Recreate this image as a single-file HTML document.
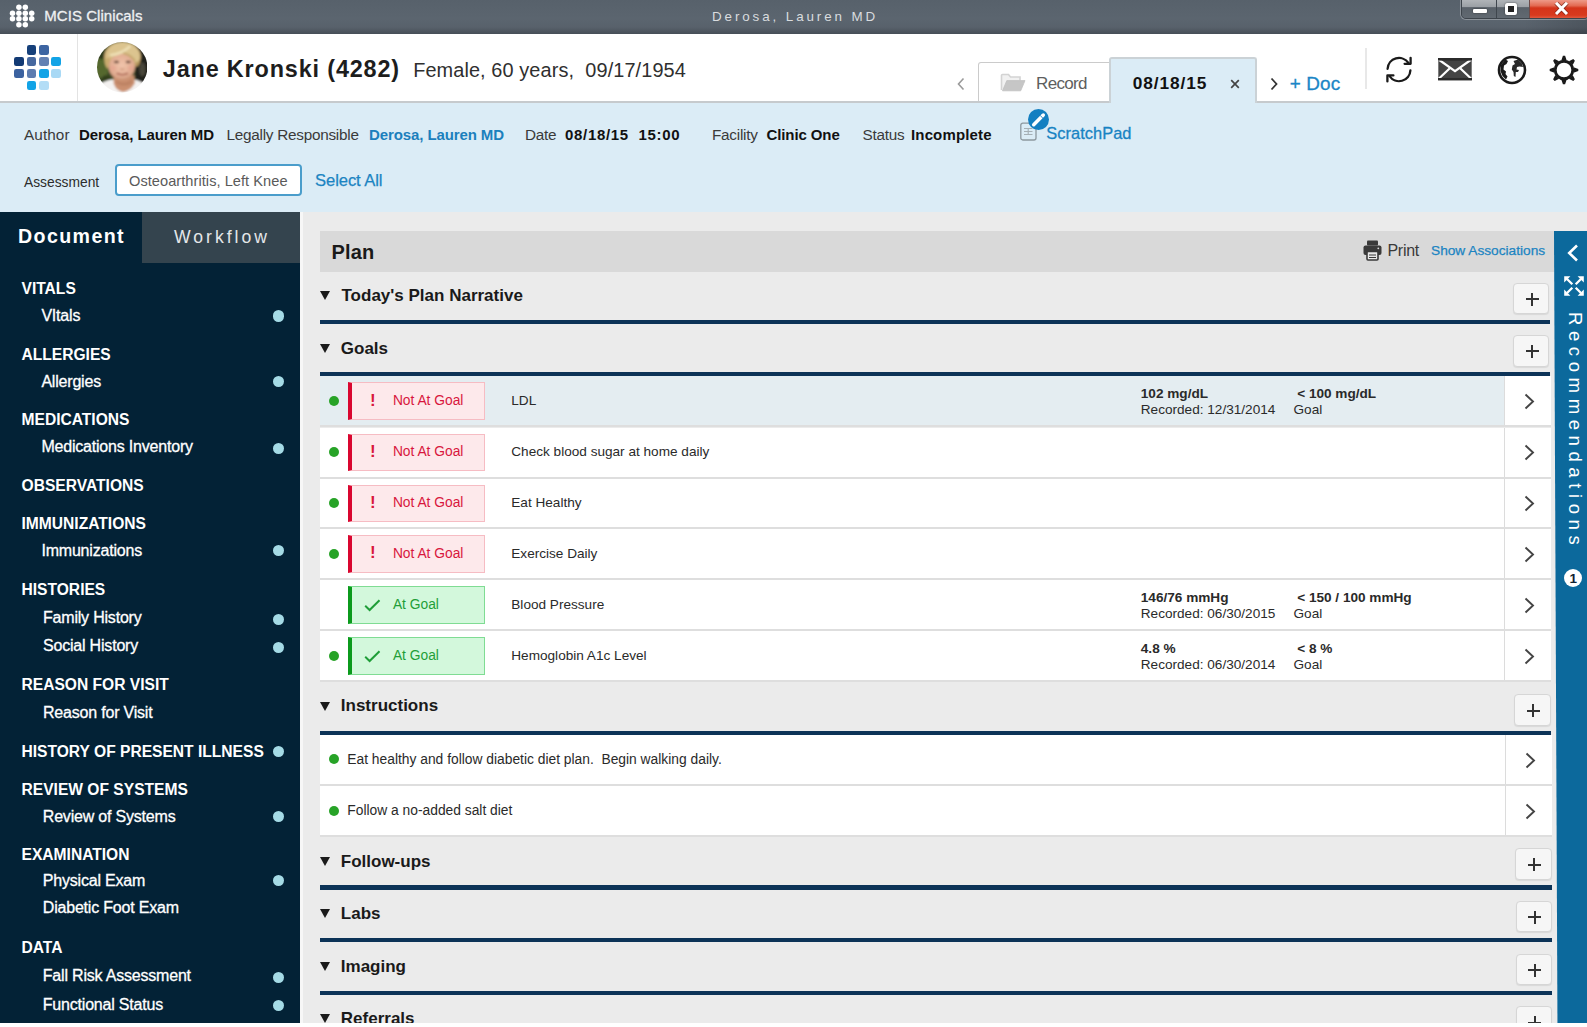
<!DOCTYPE html>
<html lang="en">
<head>
<meta charset="utf-8">
<title>MCIS Clinicals</title>
<style>
*{box-sizing:border-box;margin:0;padding:0}
html,body{width:1587px;height:1027px;overflow:hidden;background:#fff}
body{position:relative;font-family:"Liberation Sans",Arial,sans-serif;color:#222;-webkit-font-smoothing:antialiased}
.a{position:absolute}
.t{position:absolute;white-space:nowrap;line-height:1}
.b{font-weight:bold}
/* title bar */
#titlebar{left:0;top:0;width:1587px;height:34px;background:linear-gradient(90deg,rgba(0,0,0,0) 0,rgba(0,0,0,0) 96%,rgba(0,0,0,.14) 100%),linear-gradient(#57616b 0,#5b656f 55%,#58616b 80%,#464e57 100%)}
#titlebar .dot{position:absolute;width:5.4px;height:5.4px;border-radius:50%;background:#fff}
/* header */
#header{left:0;top:34px;width:1587px;height:68.8px;background:#fff;border-bottom:2px solid #c6cacd;z-index:3}
.sq{position:absolute;width:9.6px;height:9.4px;border-radius:2.2px}
/* info bar */
#info{left:0;top:102px;width:1587px;height:109.8px;background:#dbecf6;z-index:2}
.seg{font-size:15.3px;color:#3a3a3a;letter-spacing:-0.25px}
.segb{font-size:15px;font-weight:bold;color:#111;letter-spacing:-0.1px}
/* sidebar */
#side{left:0;top:211px;width:300px;height:812px;background:#032236}
#side .h{position:absolute;left:21.5px;font-weight:bold;font-size:15.6px;color:#fff;white-space:nowrap;line-height:1}
#side .i{position:absolute;margin-top:0.4px;font-size:16px;color:#fff;white-space:nowrap;line-height:1;letter-spacing:-0.2px;-webkit-text-stroke:0.3px #fff}
#side .d{position:absolute;left:272.7px;width:11.2px;height:11.2px;border-radius:50%;background:#a5dbe6}
/* main */
#main{left:300px;top:211px;width:1287px;height:812px;background:#ebebeb;overflow:hidden}
.sec{position:absolute;font-weight:bold;font-size:17px;color:#1a1a1a;white-space:nowrap;line-height:1}
.tri{position:absolute;width:0;height:0;border-left:5.8px solid transparent;border-right:5.8px solid transparent;border-top:9.6px solid #1a1a1a}
.bar{position:absolute;left:320px;height:4.4px;background:#0c3357}
.plus{position:absolute;margin:-1.2px 0 0 -1.2px;width:36.2px;height:31.6px;background:#f6f6f6;border:1px solid #d6d6d6;border-radius:4px;box-shadow:0 1px 1px rgba(0,0,0,.08)}
.plus:before{content:"";position:absolute;left:11.5px;top:14.5px;width:13px;height:2px;background:#333}
.plus:after{content:"";position:absolute;left:17px;top:9px;width:2px;height:13px;background:#333}
.row{position:absolute;left:20px;background:#fff;border-bottom:2px solid #dedede}
.row .chev{position:absolute;right:0;top:0;bottom:0;width:47px;background:#fff;border-left:1.5px solid #dcdcdc}
.row .chev svg{position:absolute;left:19px;top:50%;margin-top:-7.8px}
.gd{position:absolute;left:8.7px;width:10px;height:10px;border-radius:50%;background:#27a327}
.badge{position:absolute;left:27.7px;top:6px;width:137.5px;height:37.4px;border:1px solid;border-left-width:4.6px}
.badge.red{background:#fde9eb;border-color:#f6bcc3;border-left-color:#d9062f;color:#d8173d}
.badge.grn{background:#d3f8dc;border-color:#7fdc93;border-left-color:#0b9a1c;color:#1f9e38}
.badge span{position:absolute;left:41.2px;top:10.6px;font-size:13.8px;line-height:1;white-space:nowrap}
.badge b{position:absolute;left:18.2px;top:8.3px;font-size:17px;line-height:1}
.rt{position:absolute;font-size:13.6px;color:#2a2a2a;white-space:nowrap;line-height:1}
</style>
</head>
<body>

<!-- ================= TITLE BAR ================= -->
<div id="titlebar" class="a">
  <svg class="a" style="left:0;top:0" width="40" height="32" viewBox="0 0 40 32" fill="#fff"><circle cx="18.9" cy="7.2" r="2.75"/><circle cx="25.3" cy="7.2" r="2.75"/><circle cx="12.5" cy="13.2" r="2.75"/><circle cx="18.9" cy="13.2" r="2.75"/><circle cx="25.3" cy="13.2" r="2.75"/><circle cx="31.7" cy="13.2" r="2.75"/><circle cx="12.5" cy="18.7" r="2.75"/><circle cx="18.9" cy="18.7" r="2.75"/><circle cx="25.3" cy="18.7" r="2.75"/><circle cx="31.7" cy="18.7" r="2.75"/><circle cx="18.9" cy="24.7" r="2.75"/><circle cx="25.3" cy="24.7" r="2.75"/></svg>
  <div class="t" style="left:44.3px;top:7.8px;font-size:15px;color:#eef0f2;letter-spacing:0.05px;-webkit-text-stroke:0.3px #eef0f2">MCIS Clinicals</div>
  <div class="t" style="left:712px;top:9.5px;font-size:13.4px;color:#d9dcdf;letter-spacing:2.9px">Derosa, Lauren MD</div>
  <div class="a" style="left:1460.5px;top:-1px;width:128px;height:20px;border:1px solid #3d444b;border-radius:0 0 5px 5px;overflow:hidden;box-shadow:0 0 0 1px rgba(255,255,255,.3)">
    <div class="a" style="left:0;top:0;width:35px;height:19px;background:linear-gradient(#b0b4b8 0,#9ba0a5 36%,#596169 40%,#626a72 100%);border-right:1px solid #3f464d"></div>
    <div class="a" style="left:35px;top:0;width:33px;height:19px;background:linear-gradient(#b0b4b8 0,#9ba0a5 36%,#596169 40%,#626a72 100%);border-right:1px solid #6d4a48"></div>
    <div class="a" style="left:68px;top:0;width:59px;height:19px;background:linear-gradient(#ee9a88 0,#e36a52 30%,#d4341a 42%,#d83a1e 80%,#e2634a 100%)"></div>
    <div class="a" style="left:11.5px;top:9.3px;width:13.5px;height:3.8px;background:#fff;border-radius:1px;box-shadow:0 0 1.5px #222"></div>
    <div class="a" style="left:43px;top:3.2px;width:12.4px;height:11.6px;border:3.2px solid #fff;border-radius:2px;background:#222;box-shadow:0 0 1.5px #222"></div>
    <svg class="a" style="left:92.5px;top:2px" width="15" height="13" viewBox="0 0 15 13"><path d="M2 0.8 L13 12 M13 0.8 L2 12" stroke="#5a1a10" stroke-opacity=".55" stroke-width="4.6" fill="none"/><path d="M2 0.8 L13 12 M13 0.8 L2 12" stroke="#fff" stroke-width="3" fill="none"/></svg>
  </div>
</div>

<!-- ================= HEADER ================= -->
<div id="header" class="a">
  <i class="sq" style="left:26.6px;top:11.2px;background:#16407a"></i><i class="sq" style="left:39.0px;top:11.2px;background:#3d65a2"></i><i class="sq" style="left:14.3px;top:23.1px;background:#123a74"></i><i class="sq" style="left:26.6px;top:23.1px;background:#46689f"></i><i class="sq" style="left:39.0px;top:23.1px;background:#6381b3"></i><i class="sq" style="left:51.4px;top:23.1px;background:#12a3e6"></i><i class="sq" style="left:14.3px;top:34.9px;background:#3c62a0"></i><i class="sq" style="left:26.6px;top:34.9px;background:#5d7cb0"></i><i class="sq" style="left:39.0px;top:34.9px;background:#12a3e6"></i><i class="sq" style="left:51.4px;top:34.9px;background:#a9d9f5"></i><i class="sq" style="left:26.6px;top:46.7px;background:#12a3e6"></i><i class="sq" style="left:39.0px;top:46.7px;background:#b3ddf6"></i>
  <div class="a" style="left:76.5px;top:0;width:1.5px;height:67px;background:#e3e3e3"></div>
  <!-- avatar -->
  <svg class="a" id="avatar" style="left:96.8px;top:8.3px" width="50.4" height="50.4" viewBox="0 0 50 50">
    <defs>
      <clipPath id="avc"><circle cx="25" cy="25" r="25"/></clipPath>
      <filter id="avb" x="-10%" y="-10%" width="120%" height="120%"><feGaussianBlur stdDeviation="0.9"/></filter>
      <radialGradient id="avh" cx="50%" cy="30%" r="75%"><stop offset="0" stop-color="#ecdcae"/><stop offset="0.6" stop-color="#d3b67c"/><stop offset="1" stop-color="#a98a55"/></radialGradient>
      <radialGradient id="avf" cx="50%" cy="45%" r="60%"><stop offset="0" stop-color="#f0c4ab"/><stop offset="0.7" stop-color="#e2ae93"/><stop offset="1" stop-color="#c48c6e"/></radialGradient>
    </defs>
    <g clip-path="url(#avc)"><g filter="url(#avb)">
      <rect x="-2" y="-2" width="54" height="54" fill="#3d4a26"/>
      <ellipse cx="5" cy="24" rx="7" ry="12" fill="#54672f"/>
      <ellipse cx="9" cy="38" rx="5" ry="5" fill="#33401f"/>
      <ellipse cx="4" cy="12" rx="5" ry="5" fill="#2f3a1e"/>
      <rect x="38" y="-2" width="14" height="54" fill="#24241f"/>
      <ellipse cx="45" cy="27" rx="3" ry="7" fill="#4a463a"/>
      <path d="M-2 52 L-2 46 Q6 38 16 37 L25 47 L36 37 Q44 38 52 46 L52 52 Z" fill="#f4f2f1"/>
      <path d="M16.5 33 L37 33 L37.5 41 Q33 49 26 49.5 Q19 49 16.5 41 Z" fill="#cb9070"/>
      <path d="M19 38 Q27 43 35 37 L35 41 Q27 46 19 41 Z" fill="#b87e5f" opacity=".7"/>
      <ellipse cx="25.3" cy="14.5" rx="18.2" ry="14.5" fill="url(#avh)"/>
      <path d="M7.5 14 Q6.5 24 11 27 L13 17 Z" fill="#c9aa6e"/>
      <path d="M43 14 Q44 22 39.5 25 L38 17 Z" fill="#b3945c"/>
      <ellipse cx="24.6" cy="24.6" rx="13.2" ry="12.8" fill="url(#avf)"/>
      <path d="M9 17 Q10 3 26 1 Q42 2 42.5 17 Q40 21 37.5 20 Q33 13 25 11.5 Q18 15 12.5 14.5 Q10 15.5 9 17 Z" fill="#dcc48f"/>
      <path d="M13 13 Q24 12 33 4" stroke="#efe2b8" stroke-width="2.4" fill="none"/>
      <path d="M26 11 Q33 12 38 19" stroke="#c2a468" stroke-width="1.6" fill="none"/>
      <ellipse cx="19.3" cy="19.8" rx="2.6" ry="1.3" fill="#553629" opacity=".85"/>
      <ellipse cx="31" cy="19.8" rx="2.6" ry="1.3" fill="#553629" opacity=".85"/>
      <ellipse cx="16" cy="26" rx="3" ry="2.4" fill="#e59f8d" opacity=".5"/>
      <ellipse cx="33.5" cy="26" rx="3" ry="2.4" fill="#e59f8d" opacity=".5"/>
      <path d="M19.5 31 Q25 33.8 30.8 31" stroke="#a9604f" stroke-width="1.5" fill="none"/>
      <path d="M23.2 26.4 Q25 27.6 27 26.4" stroke="#c08468" stroke-width="1" fill="none"/>
    </g></g>
  </svg>
  <div class="t b" id="pname" style="left:162.8px;top:24.4px;font-size:23.4px;color:#1d1d1d;letter-spacing:0.85px">Jane Kronski (4282)</div>
  <div class="t" id="pinfo" style="left:413.2px;top:26.8px;font-size:19.9px;color:#2f2f2f;letter-spacing:0.1px">Female, 60 years,&nbsp; 09/17/1954</div>

  <!-- tabs -->
  <svg class="a" style="left:956px;top:43px" width="10" height="14" viewBox="0 0 10 14"><path d="M7.5 1.5 L2.5 7 L7.5 12.5" stroke="#9a9a9a" stroke-width="1.6" fill="none"/></svg>
  <div class="a" style="left:978px;top:27.5px;width:133px;height:39.3px;background:#fff;border:1.7px solid #cbcbcb;border-bottom:none;border-radius:3px 0 0 0"></div>
  <svg class="a" style="left:1000px;top:39px" width="26" height="19" viewBox="0 0 26 19"><path d="M1.5 17 V2.5 a1 1 0 0 1 1 -1 h6 l2 2.5 H20 v3.5" fill="#f1f1f1" stroke="#d3d3d3" stroke-width="1.6"/><path d="M2.5 17.8 L6.8 7.6 H25 L20.7 17.8 Z" fill="#c6c6c6" stroke="#c0c0c0" stroke-width="0.8"/></svg>
  <div class="t" style="left:1036px;top:40.9px;font-size:17px;color:#5e5e5e;letter-spacing:-0.65px">Record</div>
  <div class="a" style="left:1108.5px;top:23px;width:148px;height:45.8px;background:#dbecf6;border:2px solid #cbd2d6;border-bottom:none;border-radius:3px 3px 0 0"></div>
  <div class="t b" style="left:1132.7px;top:40.8px;font-size:17.3px;color:#111;letter-spacing:0.9px">08/18/15</div>
  <svg class="a" style="left:1229.8px;top:44.6px" width="10" height="10" viewBox="0 0 10 10"><path d="M1.2 1.2 L8.8 8.8 M8.8 1.2 L1.2 8.8" stroke="#444" stroke-width="1.7" fill="none"/></svg>
  <svg class="a" style="left:1269px;top:43px" width="10" height="14" viewBox="0 0 10 14"><path d="M2.5 1.5 L7.5 7 L2.5 12.5" stroke="#333" stroke-width="1.8" fill="none"/></svg>
  <div class="t" style="left:1289.8px;top:41.2px;font-size:18.9px;color:#1b86c6;letter-spacing:0.1px;-webkit-text-stroke:0.3px #1b86c6">+ Doc</div>

  <!-- right icons -->
  <div class="a" style="left:1365px;top:14px;width:1.5px;height:41px;background:#e8e8e8"></div>
  <svg class="a" id="ic-refresh" style="left:1382.6px;top:19.6px" width="32" height="32" viewBox="0 0 32 32" fill="none" stroke="#1a1a1a" stroke-width="2.3" stroke-linecap="round" stroke-linejoin="round">
    <path d="M4.6 14.8 A11.4 11.4 0 0 1 25.4 9"/><path d="M27.6 3.8 V9.8 H21.6"/>
    <path d="M27.4 16.4 A11.4 11.4 0 0 1 6.6 22.2"/><path d="M4.4 27.4 V21.4 H10.4"/>
  </svg>
  <svg class="a" id="ic-mail" style="left:1438.3px;top:24.2px" width="34" height="22.4" viewBox="0 0 34 22.4">
    <rect x="0.3" y="0.3" width="33.4" height="21.8" fill="#444"/>
    <path d="M0.5 1.5 L17 13.2 L33.5 1.5" stroke="#fff" stroke-width="2.3" fill="none"/>
    <path d="M0.5 21 L11.8 10.2 M33.5 21 L22.2 10.2" stroke="#fff" stroke-width="2.2" fill="none"/>
    <rect x="0" y="0" width="34" height="2.6" fill="#2b2b2b"/><rect x="0" y="20" width="34" height="2.4" fill="#2b2b2b"/>
  </svg>
  <svg class="a" id="ic-globe" style="left:1497.2px;top:21.3px" width="30" height="30" viewBox="0 0 30 30">
    <circle cx="15" cy="15" r="13" fill="#fff" stroke="#1a1a1a" stroke-width="2.6"/>
    <path d="M8.5 4.5 L11 6 L9.5 9 L7 10.5 L6.5 14.5 L9 16.5 L8.5 19 L10.5 21.5 L9 24.5 L5.5 21 L3.5 16 L3.8 10 Z" fill="#1a1a1a"/>
    <path d="M16.5 6 L21 4.5 L25 8.5 L26 12 L22.5 11.5 L20 12 L19.5 14.5 L22 15 L21 17 L18.8 17 L18.5 22 L16.8 21 L16.5 17 L14.8 14.5 L15.5 10.5 L18 9 Z" fill="#2a2a2a"/>
  </svg>
  <svg class="a" id="ic-gear" style="left:1547.5px;top:20.3px" width="32" height="32" viewBox="0 0 32 32"><g fill="#1a1a1a" transform="translate(16 16)"><path d="M-2.7 -9.6 L-1.1 -14.3 L1.1 -14.3 L2.7 -9.6 Z" transform="rotate(0)"/><path d="M-2.7 -9.6 L-1.1 -14.3 L1.1 -14.3 L2.7 -9.6 Z" transform="rotate(45)"/><path d="M-2.7 -9.6 L-1.1 -14.3 L1.1 -14.3 L2.7 -9.6 Z" transform="rotate(90)"/><path d="M-2.7 -9.6 L-1.1 -14.3 L1.1 -14.3 L2.7 -9.6 Z" transform="rotate(135)"/><path d="M-2.7 -9.6 L-1.1 -14.3 L1.1 -14.3 L2.7 -9.6 Z" transform="rotate(180)"/><path d="M-2.7 -9.6 L-1.1 -14.3 L1.1 -14.3 L2.7 -9.6 Z" transform="rotate(225)"/><path d="M-2.7 -9.6 L-1.1 -14.3 L1.1 -14.3 L2.7 -9.6 Z" transform="rotate(270)"/><path d="M-2.7 -9.6 L-1.1 -14.3 L1.1 -14.3 L2.7 -9.6 Z" transform="rotate(315)"/><circle r="8.8" fill="none" stroke="#1a1a1a" stroke-width="2.9"/></g></svg>
</div>

<!-- ================= INFO BAR ================= -->
<div id="info" class="a">
  <div class="t seg" style="left:24px;top:24.5px;letter-spacing:0.1px">Author</div>
  <div class="t segb" style="left:79px;top:24.5px">Derosa, Lauren MD</div>
  <div class="t seg" style="left:226.5px;top:24.5px">Legally Responsible</div>
  <div class="t segb" style="left:369px;top:24.5px;color:#1b80bd">Derosa, Lauren MD</div>
  <div class="t seg" style="left:525px;top:24.5px">Date</div>
  <div class="t segb" style="left:565px;top:24.5px;letter-spacing:0.68px">08/18/15&nbsp; 15:00</div>
  <div class="t seg" style="left:712px;top:24.5px">Facility</div>
  <div class="t segb" style="left:766.5px;top:24.5px">Clinic One</div>
  <div class="t seg" style="left:862.5px;top:24.5px">Status</div>
  <div class="t segb" style="left:911px;top:24.5px;letter-spacing:0.15px">Incomplete</div>
  <!-- scratchpad -->
  <svg class="a" style="left:1019.6px;top:20px" width="17" height="19" viewBox="0 0 17 19" fill="none" stroke="#8d989f" stroke-width="1.3"><rect x="0.8" y="1.2" width="15.2" height="16.8" rx="2"/><path d="M4 6.5 H12.5 M4 9.5 H12.5 M4 12.5 H12.5 M8.2 6.5 V12.5" stroke-width="1.1" stroke="#a5afb5"/></svg>
  <div class="a" style="left:1027.6px;top:6.7px;width:21.8px;height:21.8px;border-radius:50%;background:#147fc1"></div>
  <svg class="a" style="left:1027.6px;top:6.7px" width="21.8" height="21.8" viewBox="-10.9 -10.9 21.8 21.8"><path d="M-5.2 4.8 L4.4 -4.8" stroke="#fff" stroke-width="3.5" stroke-linecap="round"/><path d="M1.2 -4.6 L4.4 -1.2" stroke="#147fc1" stroke-width="0.9"/></svg>
  <div class="t" style="left:1046.3px;top:23px;font-size:16.4px;color:#1783c3;letter-spacing:0.05px;-webkit-text-stroke:0.3px #1783c3">ScratchPad</div>
  <!-- assessment -->
  <div class="t" style="left:24px;top:74px;font-size:13.8px;color:#2c2c2c">Assessment</div>
  <div class="a" style="left:114.5px;top:62px;width:187.5px;height:32px;background:#fff;border:2px solid #4a9dcb;border-radius:4px"></div>
  <div class="t" style="left:129px;top:71.5px;font-size:14.6px;color:#5a5a5a;letter-spacing:0.05px">Osteoarthritis, Left Knee</div>
  <div class="t" style="left:315px;top:70.8px;font-size:16.6px;color:#1b84c2;letter-spacing:-0.08px;-webkit-text-stroke:0.25px #1b84c2">Select All</div>
</div>

<!-- ================= SIDEBAR ================= -->
<div id="side" class="a">
  <div class="a" style="left:141.5px;top:0.5px;width:158.5px;height:51.5px;background:#34444e"></div>
  <div class="t b" style="left:18px;top:15.6px;font-size:19.6px;color:#fff;letter-spacing:1.4px">Document</div>
  <div class="t" style="left:174px;top:18.2px;font-size:17.6px;color:#e4e7e9;letter-spacing:3px">Workflow</div>
  <div class="h" style="top:69.9px">VITALS</div>
  <div class="h" style="top:135.5px">ALLERGIES</div>
  <div class="h" style="top:201.4px">MEDICATIONS</div>
  <div class="h" style="top:266.6px">OBSERVATIONS</div>
  <div class="h" style="top:304.7px">IMMUNIZATIONS</div>
  <div class="h" style="top:370.5px">HISTORIES</div>
  <div class="h" style="top:465.9px">REASON FOR VISIT</div>
  <div class="h" style="top:532.9px">HISTORY OF PRESENT ILLNESS</div>
  <div class="h" style="top:570.9px">REVIEW OF SYSTEMS</div>
  <div class="h" style="top:635.9px">EXAMINATION</div>
  <div class="h" style="top:728.8px">DATA</div>
  <div class="i" style="left:41.4px;top:96.2px">VItals</div><i class="d" style="top:99.4px"></i>
  <div class="i" style="left:41.4px;top:162.7px">Allergies</div><i class="d" style="top:164.9px"></i>
  <div class="i" style="left:41.4px;top:227.7px">Medications Inventory</div><i class="d" style="top:231.6px"></i>
  <div class="i" style="left:41.4px;top:331.5px">Immunizations</div><i class="d" style="top:333.6px"></i>
  <div class="i" style="left:43.0px;top:398.4px">Family History</div><i class="d" style="top:402.6px"></i>
  <div class="i" style="left:43.0px;top:426.7px">Social History</div><i class="d" style="top:431.2px"></i>
  <div class="i" style="left:43.0px;top:493.9px">Reason for Visit</div>
  <div class="i" style="left:42.8px;top:597.2px">Review of Systems</div><i class="d" style="top:600.0px"></i>
  <div class="i" style="left:42.8px;top:661.3px">Physical Exam</div><i class="d" style="top:664.1px"></i>
  <div class="i" style="left:42.8px;top:689.1px">Diabetic Foot Exam</div>
  <div class="i" style="left:42.8px;top:757.0px">Fall Risk Assessment</div><i class="d" style="top:760.6px"></i>
  <div class="i" style="left:42.8px;top:785.7px">Functional Status</div><i class="d" style="top:788.9px"></i>
  <i class="d" style="top:535.0px"></i>
</div>

<!-- ================= MAIN ================= -->
<div id="main" class="a">
  <div class="a" style="left:0;top:0;width:2.5px;height:812px;background:#f7f7f7"></div>
  <div class="a" style="left:20.0px;top:20.0px;width:1236.0px;height:41.3px;background:#d9d9d9"></div>
  <div class="t b" style="left:31.5px;top:30.5px;font-size:20px;color:#1a1a1a;letter-spacing:0.2px">Plan</div>
  <svg class="a" style="left:1063.0px;top:28.5px" width="19" height="21" viewBox="0 0 19 21"><rect x="4" y="0.5" width="11" height="5" rx="1" fill="#3a3a3a"/><rect x="0.5" y="5.5" width="18" height="9.5" rx="2" fill="#3a3a3a"/><rect x="4" y="11.5" width="11" height="8.5" rx="1" fill="#e9e9e9" stroke="#3a3a3a" stroke-width="1.6"/><path d="M6 15 H13 M6 17.5 H13" stroke="#3a3a3a" stroke-width="1"/><circle cx="15.3" cy="8.3" r="0.9" fill="#ddd"/></svg>
  <div class="t" style="left:1087.5px;top:32.0px;font-size:16px;color:#3a3a3a;letter-spacing:-0.3px">Print</div>
  <div class="t" style="left:1131.0px;top:33.0px;font-size:13.7px;color:#1b84c2;-webkit-text-stroke:0.25px #1b84c2">Show Associations</div>
  <i class="tri" style="left:20.2px;top:80.4px"></i><div class="sec" style="left:41.5px;top:76.3px">Today's Plan Narrative</div><i class="bar" style="left:20.0px;top:109.0px;width:1229.7px"></i><i class="plus" style="left:1214.2px;top:72.8px"></i>
  <i class="tri" style="left:20.2px;top:132.7px"></i><div class="sec" style="left:40.8px;top:128.6px">Goals</div><i class="bar" style="left:20.0px;top:161.4px;width:1230.0px"></i><i class="plus" style="left:1214.3px;top:125.1px"></i>
  <i class="tri" style="left:20.2px;top:490.5px"></i><div class="sec" style="left:40.8px;top:486.4px">Instructions</div><i class="bar" style="left:20.0px;top:520.0px;width:1231.2px"></i><i class="plus" style="left:1215.6px;top:484.3px"></i>
  <i class="tri" style="left:20.2px;top:645.7px"></i><div class="sec" style="left:40.8px;top:641.6px">Follow-ups</div><i class="bar" style="left:20.0px;top:674.4px;width:1231.8px"></i><i class="plus" style="left:1216.6px;top:638.3px"></i>
  <i class="tri" style="left:20.2px;top:698.2px"></i><div class="sec" style="left:40.8px;top:694.1px">Labs</div><i class="bar" style="left:20.0px;top:727.0px;width:1232.0px"></i><i class="plus" style="left:1216.8px;top:691.0px"></i>
  <i class="tri" style="left:20.2px;top:751.0px"></i><div class="sec" style="left:40.8px;top:746.9px">Imaging</div><i class="bar" style="left:20.0px;top:779.6px;width:1232.2px"></i><i class="plus" style="left:1217.0px;top:743.8px"></i>
  <i class="tri" style="left:20.2px;top:802.9px"></i><div class="sec" style="left:40.8px;top:798.8px">Referrals</div><i class="bar" style="left:20.0px;top:832.2px;width:1232.2px"></i><i class="plus" style="left:1217.0px;top:796.6px"></i>
  <div class="row" style="top:165.4px;width:1230.5px;height:51.1px;background:#e4edf1"><i class="gd" style="top:19.4px"></i><div class="badge red"><b>!</b><span>Not At Goal</span></div><div class="rt" style="left:191.3px;top:17.6px">LDL</div><div class="rt b" style="left:820.8px;top:10.9px">102 mg/dL</div><div class="rt" style="left:820.8px;top:26.9px">Recorded: 12/31/2014</div><div class="rt b" style="left:977.2px;top:10.9px">&lt; 100 mg/dL</div><div class="rt" style="left:973.5px;top:26.9px">Goal</div><div class="chev"><svg width="11" height="17" viewBox="0 0 11 17"><path d="M1.5 1.5 L9 8.5 L1.5 15.5" fill="none" stroke="#444" stroke-width="1.9"/></svg></div></div>
  <div class="row" style="top:216.5px;width:1230.5px;height:51.0px;background:#fff"><i class="gd" style="top:19.4px"></i><div class="badge red"><b>!</b><span>Not At Goal</span></div><div class="rt" style="left:191.3px;top:17.6px">Check blood sugar at home daily</div><div class="chev"><svg width="11" height="17" viewBox="0 0 11 17"><path d="M1.5 1.5 L9 8.5 L1.5 15.5" fill="none" stroke="#444" stroke-width="1.9"/></svg></div></div>
  <div class="row" style="top:267.5px;width:1230.5px;height:50.7px;background:#fff"><i class="gd" style="top:19.4px"></i><div class="badge red"><b>!</b><span>Not At Goal</span></div><div class="rt" style="left:191.3px;top:17.6px">Eat Healthy</div><div class="chev"><svg width="11" height="17" viewBox="0 0 11 17"><path d="M1.5 1.5 L9 8.5 L1.5 15.5" fill="none" stroke="#444" stroke-width="1.9"/></svg></div></div>
  <div class="row" style="top:318.2px;width:1230.5px;height:51.0px;background:#fff"><i class="gd" style="top:19.4px"></i><div class="badge red"><b>!</b><span>Not At Goal</span></div><div class="rt" style="left:191.3px;top:17.6px">Exercise Daily</div><div class="chev"><svg width="11" height="17" viewBox="0 0 11 17"><path d="M1.5 1.5 L9 8.5 L1.5 15.5" fill="none" stroke="#444" stroke-width="1.9"/></svg></div></div>
  <div class="row" style="top:369.2px;width:1230.5px;height:51.0px;background:#fff"><div class="badge grn"><svg class="a" style="left:12.5px;top:11.5px" width="17" height="13" viewBox="0 0 17 13"><path d="M1.2 6.8 L5.6 11 L15.5 1.2" fill="none" stroke="#1f9e38" stroke-width="2"/></svg><span>At Goal</span></div><div class="rt" style="left:191.3px;top:17.6px">Blood Pressure</div><div class="rt b" style="left:820.8px;top:10.9px">146/76 mmHg</div><div class="rt" style="left:820.8px;top:26.9px">Recorded: 06/30/2015</div><div class="rt b" style="left:977.2px;top:10.9px">&lt; 150 / 100 mmHg</div><div class="rt" style="left:973.5px;top:26.9px">Goal</div><div class="chev"><svg width="11" height="17" viewBox="0 0 11 17"><path d="M1.5 1.5 L9 8.5 L1.5 15.5" fill="none" stroke="#444" stroke-width="1.9"/></svg></div></div>
  <div class="row" style="top:420.2px;width:1230.5px;height:51.2px;background:#fff"><i class="gd" style="top:19.4px"></i><div class="badge grn"><svg class="a" style="left:12.5px;top:11.5px" width="17" height="13" viewBox="0 0 17 13"><path d="M1.2 6.8 L5.6 11 L15.5 1.2" fill="none" stroke="#1f9e38" stroke-width="2"/></svg><span>At Goal</span></div><div class="rt" style="left:191.3px;top:17.6px">Hemoglobin A1c Level</div><div class="rt b" style="left:820.8px;top:10.9px">4.8 %</div><div class="rt" style="left:820.8px;top:26.9px">Recorded: 06/30/2014</div><div class="rt b" style="left:977.2px;top:10.9px">&lt; 8 %</div><div class="rt" style="left:973.5px;top:26.9px">Goal</div><div class="chev"><svg width="11" height="17" viewBox="0 0 11 17"><path d="M1.5 1.5 L9 8.5 L1.5 15.5" fill="none" stroke="#444" stroke-width="1.9"/></svg></div></div>
  <div class="row" style="top:524.0px;width:1231.6px;height:51.4px"><i class="gd" style="top:19.2px"></i><div class="rt" style="left:27.3px;top:17.8px;font-size:13.82px">Eat healthy and follow diabetic diet plan.&nbsp; Begin walking daily.</div><div class="chev"><svg width="11" height="17" viewBox="0 0 11 17"><path d="M1.5 1.5 L9 8.5 L1.5 15.5" fill="none" stroke="#444" stroke-width="1.9"/></svg></div></div>
  <div class="row" style="top:575.4px;width:1231.6px;height:50.5px"><i class="gd" style="top:19.2px"></i><div class="rt" style="left:27.3px;top:17.8px;font-size:13.82px">Follow a no-added salt diet</div><div class="chev"><svg width="11" height="17" viewBox="0 0 11 17"><path d="M1.5 1.5 L9 8.5 L1.5 15.5" fill="none" stroke="#444" stroke-width="1.9"/></svg></div></div>
  <div class="a" style="left:1254.1px;top:19.5px;width:40px;height:793px;background:#0c699c;transform-origin:0 0;transform:skewX(0.25deg)"></div>
  <svg class="a" style="left:1267.0px;top:33.0px" width="12" height="18" viewBox="0 0 12 18"><path d="M10 1.5 L2.2 9 L10 16.5" fill="none" stroke="#fff" stroke-width="2.6"/></svg>
  <svg class="a" style="left:1264px;top:65.2px" width="20" height="20" viewBox="0 0 20 20" fill="#fff" stroke="#fff"><path d="M3 3 L8.3 8.3 M17 3 L11.7 8.3 M3 17 L8.3 11.7 M17 17 L11.7 11.7" stroke-width="2.3" fill="none"/><path d="M0.2 0.2 H6.4 L0.2 6.4 Z M19.8 0.2 H13.6 L19.8 6.4 Z M0.2 19.8 H6.4 L0.2 13.6 Z M19.8 19.8 H13.6 L19.8 13.6 Z" stroke="none"/></svg>
  <div class="t" id="rec" style="left:1283.5px;top:101.2px;font-size:18.6px;color:#fff;letter-spacing:5.55px;transform-origin:0 0;transform:rotate(90deg)">Recommendations</div>
  <div class="a" style="left:1264.3px;top:358.0px;width:18px;height:18px;border-radius:50%;background:#fff"></div><div class="t b" style="left:1269.6px;top:360.5px;font-size:13.5px;color:#123">1</div>
</div>

</body>
</html>
